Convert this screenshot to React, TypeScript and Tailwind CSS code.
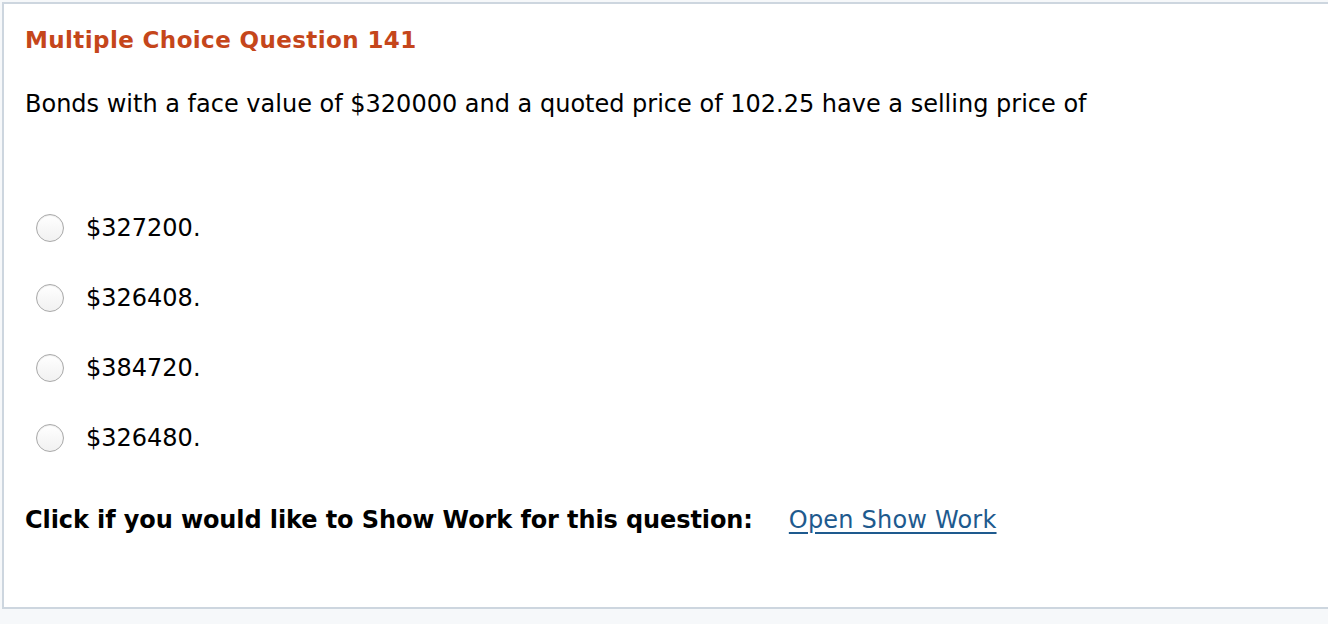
const options = ["$327200.", "$326408.", "$384720.", "$326480."];

function Radio() {
  return (
    <span className="block h-[28px] w-[28px] shrink-0 rounded-full border border-[#a9a9a9] bg-gradient-to-b from-white to-[#f1f1f1] shadow-[inset_0_1px_1px_rgba(0,0,0,0.08)]" />
  );
}

export default function App() {
  return (
    <div className="h-[624px] w-full overflow-hidden bg-[#f6f8fa] pl-[2px] pt-[2px] font-['DejaVu_Sans',Verdana,sans-serif] text-black">
      <div className="h-[607px] border-2 border-r-0 border-[#cdd6df] bg-white pl-[21px]">
        <h2 className="pt-[23px] text-[23px] font-bold leading-[27px] tracking-[0.4px] text-[#c5461b]">
          Multiple Choice Question 141
        </h2>
        <p className="mt-[36px] text-[24px] leading-[28px]">
          Bonds with a face value of $320000 and a quoted price of 102.25 have a selling price of
        </p>
        <div className="mt-[96px] flex flex-col gap-[42px] pl-[11px]">
          {options.map((o) => (
            <label key={o} className="flex h-[28px] items-center gap-[22px]">
              <Radio />
              <span className="text-[24px] leading-[28px]">{o}</span>
            </label>
          ))}
        </div>
        <div className="mt-[54px] flex items-center gap-[36px] text-[24px] leading-[28px]">
          <span className="font-bold tracking-[-0.1px]">Click if you would like to Show Work for this question:</span>
          <a href="#" className="tracking-[0.2px] text-[#1e5a8e] underline underline-offset-[4px]">
            Open Show Work
          </a>
        </div>
      </div>
    </div>
  );
}
